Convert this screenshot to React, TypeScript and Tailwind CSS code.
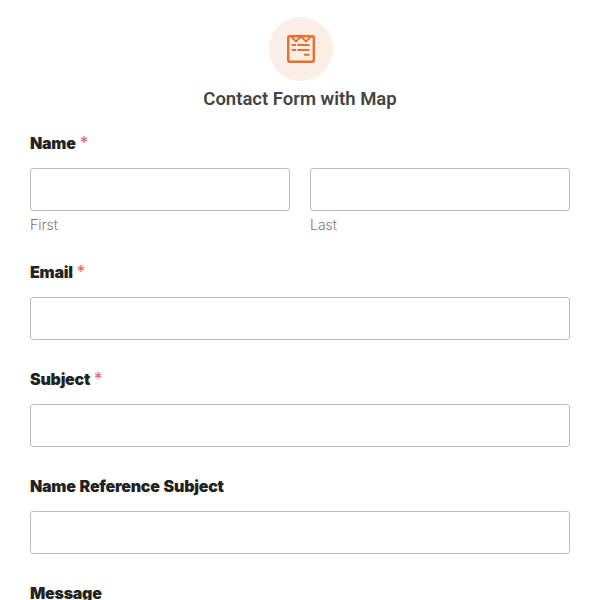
const labelFont = "font-['Inter','Liberation_Sans',sans-serif]";

function FormIcon() {
  return (
    <svg width="28" height="28" viewBox="0 0 28 28" fill="none" stroke="#e8702a" strokeWidth="2.4">
      <rect x="1.2" y="1.2" width="25.6" height="25.6" rx="1.5" />
      <path d="M4.5 2l4.5 4.5L13.5 2M14.5 2l4.5 4.5L23.5 2" strokeWidth="1.8" />
      <path d="M4.7 10h4.3M10.3 10h12.2M4.7 15h4.3M10.3 15h12.2M17 19.7h5.5" strokeWidth="2" />
    </svg>
  );
}

function Field({ label, required }: { label: string; required?: boolean }) {
  return (
    <div className="mb-[27px]">
      <FieldLabel label={label} required={required} />
      <input type="text" className="block w-full h-[43px] rounded-[3px] border border-[#bdbdbd] bg-white" />
    </div>
  );
}

function FieldLabel({ label, required }: { label: string; required?: boolean }) {
  return (
    <div className="h-[25px] mb-[12px] text-[16px] leading-[25px] font-black tracking-[-0.25px] [word-spacing:1px] text-[#222222]">
      {label}
      {required && <span className="ml-[4px] text-[17px] font-normal text-[#ef5a5f]">*</span>}
    </div>
  );
}

export default function App() {
  return (
    <div className={`h-[600px] overflow-hidden bg-white px-[30px] pt-[17px] ${labelFont}`}>
      <div className="flex flex-col items-center">
        <div className="ml-px flex h-[64px] w-[64px] items-center justify-center rounded-full bg-[#fbeee6]">
          <FormIcon />
        </div>
        <h1 className="mt-[6px] h-[24px] font-['Roboto',sans-serif] text-[18.5px] leading-[24px] font-semibold text-[#444444]">
          Contact Form with Map
        </h1>
      </div>

      <div className="mt-[20px]">
        <FieldLabel label="Name" required />
        <div className="grid grid-cols-2 gap-[20px]">
          <div>
            <input type="text" className="block w-full h-[43px] rounded-[3px] border border-[#bdbdbd] bg-white" />
            <div className="mt-[5px] text-[14px] leading-[18px] font-light text-[#777777]">First</div>
          </div>
          <div>
            <input type="text" className="block w-full h-[43px] rounded-[3px] border border-[#bdbdbd] bg-white" />
            <div className="mt-[5px] text-[14px] leading-[18px] font-light text-[#777777]">Last</div>
          </div>
        </div>
      </div>

      <div className="mt-[26px]">
        <Field label="Email" required />
        <Field label="Subject" required />
        <Field label="Name Reference Subject" />
        <FieldLabel label="Message" />
      </div>
    </div>
  );
}
